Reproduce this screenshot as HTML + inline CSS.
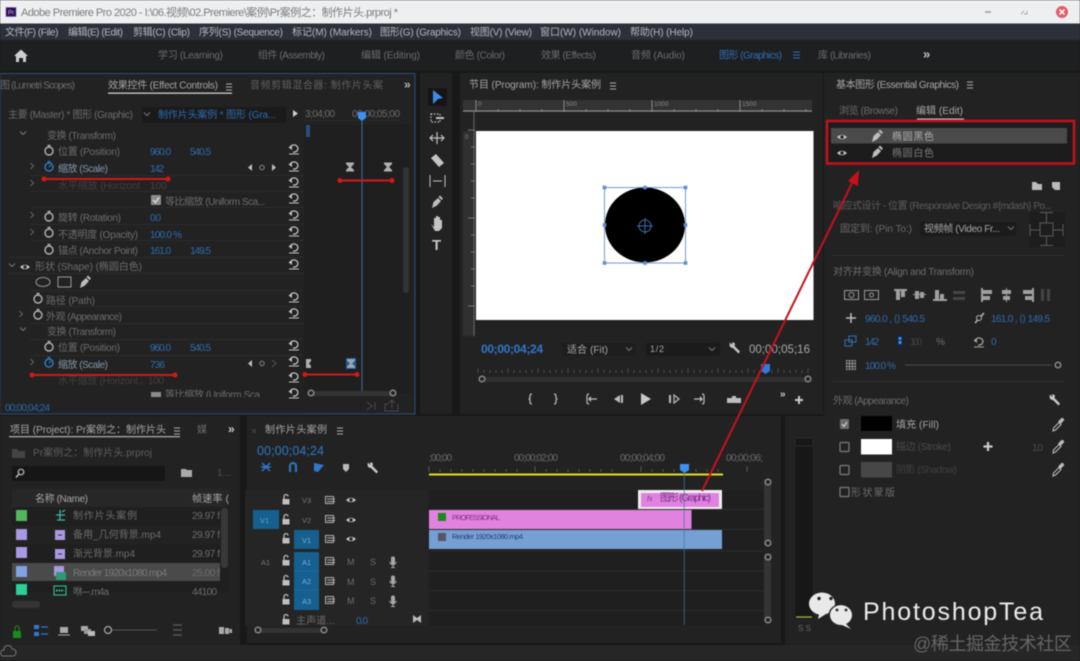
<!DOCTYPE html>
<html lang="zh"><head><meta charset="utf-8"><title>Adobe Premiere Pro 2020</title>
<style>
html,body{margin:0;padding:0;background:#1a1a1a;overflow:hidden}
svg{display:block;filter:blur(.5px)}
text{font-family:"Liberation Sans","Noto Sans CJK SC",sans-serif;font-size:10px;fill:#8e8e8e;white-space:pre}
.m{fill:#b4b8bd}.w{fill:#8a8a8a}.b{fill:#2d6bae}.d{fill:#4e4e4e}.l{fill:#a6a6a6}.g{fill:#6c6c6c}
.ic{fill:none;stroke:#bdbdbd;stroke-width:1.2}
</style></head><body>
<svg width="1080" height="661" viewBox="0 0 1080 661" xmlns="http://www.w3.org/2000/svg" lengthAdjust="spacingAndGlyphs">
<defs>
<g id="rs"><path d="M-4-1A4 3.6 0 1 1-1 3" fill="none" stroke="#c4c4c4" stroke-width="1.3"/><path d="M-5.5-1.5L-2-4V1Z" fill="#c4c4c4"/><path d="M-5 5H5" stroke="#c4c4c4" stroke-width="1"/></g>
<g id="wt"><circle r="4" fill="none" stroke="#b4b4b4" stroke-width="1.4"/><path d="M-1.5-5.5H1.5" stroke="#b4b4b4" stroke-width="1.4"/></g>
<g id="wb"><circle r="4" fill="none" stroke="#2e7cc4" stroke-width="1.4"/><path d="M-1.5-5.5H1.5M0 0L2-2" stroke="#2e7cc4" stroke-width="1.2"/></g>
<g id="ch"><path d="M-1.5-3L1.5 0L-1.5 3" fill="none" stroke="#666" stroke-width="1"/></g>
<g id="cd"><path d="M-3-1.5L0 1.5L3-1.5" fill="none" stroke="#777" stroke-width="1"/></g>
<g id="eye"><path d="M-5 0Q0-4.6 5 0Q0 4.6-5 0Z" fill="#c6c6c6"/><circle r="1.7" fill="#232323"/></g>
<g id="pen"><path d="M-5 6L-3.5 0L1-4L4-1L0 3.5Z" fill="#bdbdbd"/><path d="M1.5-5L3-6.5L6-3.5L4.5-2Z" fill="#bdbdbd"/></g>
<g id="kf"><path d="M-4-4.5H4V-3L1 0L4 3V4.500H-4V3L-1 0L-4-3Z" fill="#b0b0b0"/></g>
<g id="lock"><rect x="-3.500" y="-1" width="7" height="5.500" fill="#c0c0c0"/><path d="M-2-1V-3.500A2 2 0 0 1 2-3.500" fill="none" stroke="#c0c0c0" stroke-width="1.200"/></g>
<g id="syn"><rect x="-4.500" y="-3.500" width="8" height="7" fill="none" stroke="#b0b0b0"/><path d="M-3-1H5M-3 1.500H5" stroke="#b0b0b0"/></g>
<g id="mic"><rect x="-2" y="-5.500" width="4" height="8" rx="2" fill="#a8a8a8"/><path d="M-3.500 0Q0 6 3.500 0M0 3V5.500M-2 5.500H2" stroke="#a8a8a8" fill="none"/></g>
<g id="drop"><path d="M-5 6L-4.500 3L1-2.500L3 -.5L-2.500 5Z" fill="none" stroke="#bbb" stroke-width="1.100"/><path d="M0-3.500L3-6.500A1.500 1.500 0 0 1 5.500-4L2.500-1Z" fill="#bbb"/></g>
<g id="wr"><path d="M-5-5.500L-2.500-3L-3-5.500Q-1-6 0-4L-.5-2L5 3.500L3.500 5.500L-2 0Q-5 0-5.500-3Z" fill="#c8c8c8"/></g>
<g id="cb"><rect x="-4.500" y="-4.500" width="9" height="9" rx="1" fill="none" stroke="#7d7d7d" stroke-width="1.200"/></g>
<g id="hd"><circle r="2.800" fill="#232323" stroke="#8b8b8b" stroke-width="1.500"/></g>
<g id="hb"><rect x="-1.800" y="-1.800" width="3.600" height="3.600" fill="#5e8fd0"/></g>
</defs>

<rect width="1080" height="661" fill="#181818"/>

<!-- title bar -->
<rect width="1080" height="23.500" fill="#edeff1"/>
<rect x="6" y="7.500" width="10" height="9" fill="#2a0b55" stroke="#7a5ca8" stroke-width=".6"/>
<text x="8" y="14.500" style="font-size:6px;fill:#d7c1f2">Pr</text>
<text x="21" y="16" textLength="377" style="font-size:11px;fill:#7c7c7c">Adobe Premiere Pro 2020 - I:\06.视频\02.Premiere\案例\Pr案例之：制作片头.prproj *</text>
<path d="M985 12H991" stroke="#999" stroke-width="1.500"/>
<path d="M1021 14L1024 11M1024 14h3v-3" stroke="#aaa" fill="none"/>
<circle cx="1062" cy="12" r="6" fill="#e25c68"/><path d="M1059.500 9.500L1064.500 14.500M1064.500 9.500L1059.500 14.500" stroke="#fff" stroke-width="1.500"/>

<!-- menu -->
<rect y="23.500" width="1080" height="16.500" fill="#2b313a"/>
<text class="m" x="5" y="35.500" textLength="53.500">文件(F) (File)</text>
<text class="m" x="68" y="35.500" textLength="55">编辑(E) (Edit)</text>
<text class="m" x="133" y="35.500" textLength="57">剪辑(C) (Clip)</text>
<text class="m" x="199" y="35.500" textLength="84">序列(S) (Sequence)</text>
<text class="m" x="292" y="35.500" textLength="80">标记(M) (Markers)</text>
<text class="m" x="380" y="35.500" textLength="81">图形(G) (Graphics)</text>
<text class="m" x="470" y="35.500" textLength="62">视图(V) (View)</text>
<text class="m" x="540" y="35.500" textLength="81">窗口(W) (Window)</text>
<text class="m" x="630" y="35.500" textLength="63">帮助(H) (Help)</text>

<!-- workspace -->
<rect y="40" width="1080" height="31" fill="#1e1f20"/>
<path d="M14 56L21 49.500L28 56H26V62H23V58H19V62H16V56Z" fill="#cfcfcf"/>
<text class="g" x="158" y="58.500" textLength="65">学习 (Learning)</text>
<text class="g" x="258" y="58.500" textLength="67">组件 (Assembly)</text>
<text class="g" x="361" y="58.500" textLength="59">编辑 (Editing)</text>
<text class="g" x="455" y="58.500" textLength="50">颜色 (Color)</text>
<text class="g" x="541" y="58.500" textLength="55">效果 (Effects)</text>
<text class="g" x="631" y="58.500" textLength="54">音频 (Audio)</text>
<text x="719" y="58.500" textLength="63" style="fill:#2f6cb6">图形 (Graphics)</text>
<path d="M793 52H800M793 55H800M793 58H800" stroke="#2f6cb6"/>
<text class="g" x="818" y="58.500" textLength="53">库 (Libraries)</text>
<text x="923" y="58.500" style="font-size:13px;fill:#c4c4c4;font-weight:bold">»</text>

<!-- effect controls panel -->
<rect x="0" y="73.500" width="415" height="340.500" fill="#222223" stroke="#2a4a70" stroke-width="1.200"/>
<text class="g" x="0" y="88.500" textLength="75">图 (Lumetri Scopes)</text>
<text class="l" x="108" y="88.500" textLength="110">效果控件 (Effect Controls)</text>
<path d="M226 84H232M226 87H232M226 90H232" stroke="#aaa"/>
<rect x="108" y="92.500" width="124" height="1.300" fill="#cfcfcf"/>
<text class="d" x="250" y="88.500" textLength="133" style="fill:#606060">音频剪辑混合器: 制作片头案</text>
<text x="404" y="88.500" style="font-size:12px;fill:#bbb;font-weight:bold">»</text>
<text class="g" x="8" y="118" textLength="125">主要 (Master) * 图形 (Graphic)</text>
<rect x="142" y="107" width="144" height="16" fill="#1a1a1b"/>
<use href="#cd" x="147" y="114"/>
<text class="b" x="158" y="118" textLength="118">制作片头案例 * 图形 (Gra...</text>
<path d="M293 110L298 113.500L293 117Z" fill="#cfcfcf"/>
<text class="g" x="305" y="117" textLength="30">3;04;00</text>
<text class="g" x="352" y="117" textLength="48">00;00;05;00</text>
<rect x="304" y="124" width="98" height="270" fill="#1f1f20"/>
<rect x="402" y="124" width="10" height="270" fill="#1f1f20"/>
<rect x="403" y="167" width="6" height="126" rx="3" fill="#333"/>
<rect x="306" y="125" width="4" height="12" fill="#2a4f78"/>
<path d="M305 120.500H400" stroke="#3c3c3c" stroke-dasharray="1 2"/>

<text class="g" x="47" y="139" textLength="69">变换 (Transform)</text><use href="#cd" x="23" y="133"/>
<use href="#wt" x="49" y="151"/><text class="g" x="58" y="155" textLength="62">位置 (Position)</text>
<text class="b" x="150" y="155" textLength="21">960.0</text><text class="b" x="190" y="155" textLength="21">540.5</text>
<use href="#ch" x="32" y="166"/><use href="#wb" x="49" y="167"/><text x="58" y="172" textLength="50" style="fill:#8496aa">缩放 (Scale)</text>
<text class="b" x="150" y="172" textLength="14">142</text>
<path d="M252 164V171L248 167.500ZM272 164V171L276 167.500Z" fill="#c0c0c0"/><circle cx="262" cy="167.500" r="2.200" fill="none" stroke="#888"/>
<use href="#kf" x="350" y="167"/><use href="#kf" x="388" y="167"/>
<use href="#ch" x="32" y="183"/><text class="d" x="58" y="189" textLength="82" style="fill:#3f3f3f">水平缩放 (Horizont</text><text class="d" x="150" y="189" style="fill:#444">100</text>
<rect x="151" y="195" width="10" height="10" rx="1" fill="#8c8c8c"/><path d="M153 200L155.500 202.500L159 197.500" stroke="#ddd" fill="none" stroke-width="1.300"/>
<text class="g" x="165" y="205" textLength="100">等比缩放 (Uniform Sca...</text>
<use href="#ch" x="32" y="215"/><use href="#wt" x="49" y="217"/><text class="g" x="58" y="221" textLength="63">旋转 (Rotation)</text><text class="b" x="150" y="221" textLength="11">0.0</text>
<use href="#ch" x="32" y="232"/><use href="#wt" x="49" y="233"/><text class="g" x="58" y="238" textLength="80">不透明度 (Opacity)</text><text class="b" x="150" y="238" textLength="32">100.0 %</text>
<use href="#wt" x="49" y="250"/><text class="g" x="58" y="254" textLength="80">锚点 (Anchor Point)</text><text class="b" x="150" y="254" textLength="21">161.0</text><text class="b" x="190" y="254" textLength="21">149.5</text>
<use href="#cd" x="12" y="265"/><use href="#eye" x="25" y="267"/><text class="g" x="35" y="270" textLength="107">形状 (Shape) (椭圆白色)</text>
<ellipse cx="43" cy="282" rx="7" ry="4.500" fill="none" stroke="#999"/><rect x="58" y="277" width="13" height="10" fill="none" stroke="#999"/><use href="#pen" x="85" y="282"/>
<use href="#wt" x="38" y="299"/><text class="g" x="46" y="304" textLength="49">路径 (Path)</text>
<use href="#ch" x="21" y="314"/><use href="#wt" x="38" y="315"/><text class="g" x="46" y="320" textLength="76">外观 (Appearance)</text>
<use href="#cd" x="23" y="329"/><text class="g" x="47" y="335" textLength="69">变换 (Transform)</text>
<use href="#wt" x="49" y="347"/><text class="g" x="58" y="351" textLength="62">位置 (Position)</text><text class="b" x="150" y="351" textLength="21">960.0</text><text class="b" x="190" y="351" textLength="21">540.5</text>
<use href="#ch" x="32" y="362"/><use href="#wb" x="49" y="363"/><text x="58" y="368" textLength="50" style="fill:#8496aa">缩放 (Scale)</text><text class="b" x="150" y="368" textLength="15">736</text>
<path d="M252 360V367L248 363.500Z" fill="#c0c0c0"/><path d="M272 360L276 363.500L272 367" fill="none" stroke="#555"/><circle cx="262" cy="363.500" r="2.200" fill="none" stroke="#888"/>
<path d="M306 359H311V361L309 363.500L311 366V368H306Z" fill="#b0b0b0"/>
<rect x="346" y="358" width="10" height="11" fill="#1f5d96"/><use href="#kf" x="351" y="363.500" style="opacity:.85"/>
<text x="58" y="384" textLength="106" style="fill:#3f3f3f">水平缩放 (Horizont... 100</text>
<rect x="151" y="392" width="10" height="6" fill="#8c8c8c"/><text class="g" x="165" y="398" textLength="95">等比缩放 (Uniform Sca</text>
<rect x="0.600" y="397" width="303" height="16.400" fill="#222223"/>
<rect x="311" y="391" width="82" height="5" fill="#333"/><use href="#hd" x="311" y="393"/><use href="#hd" x="393" y="393"/>
<use href="#rs" x="294" y="149"/><use href="#rs" x="294" y="166"/><use href="#rs" x="294" y="182"/><use href="#rs" x="294" y="198"/><use href="#rs" x="294" y="215"/><use href="#rs" x="294" y="231"/><use href="#rs" x="294" y="248"/><use href="#rs" x="294" y="264"/><use href="#rs" x="294" y="297"/><use href="#rs" x="294" y="313"/><use href="#rs" x="294" y="345"/><use href="#rs" x="294" y="361"/><use href="#rs" x="294" y="377"/><use href="#rs" x="294" y="393"/>
<path d="M30 175.500H304M30 191.500H304M30 207.500H304M30 224.500H304M30 240.500H304M8 257.500H304M8 273.500H304M30 290.500H304M30 306.500H304M30 323.500H304M30 339.500H304M30 355.500H304" stroke="#2a2a2b"/>
<rect x="361.500" y="118" width="1" height="273" fill="#4a6c95"/>
<path d="M358 112H366V118L362 121L358 118Z" fill="#3f90f0"/>
<text x="5" y="411" textLength="45" style="fill:#2a68ac">00;00;04;24</text>
<path d="M367 402L372 406L367 410M375 402V410" fill="none" stroke="#4a4a4a"/><path d="M388 404H385V411H398V404M392 408V401M389 403L392 400L395 403" fill="none" stroke="#4a4a4a"/>
<path d="M42 179H168" stroke="#d31818" stroke-width="2"/><circle cx="44" cy="179" r="2.500" fill="#d31818"/><circle cx="168" cy="179" r="2.500" fill="#d31818"/>
<path d="M340 180.500H392" stroke="#d31818" stroke-width="2"/><circle cx="340" cy="180.500" r="2.500" fill="#d31818"/><circle cx="392" cy="180.500" r="2.500" fill="#d31818"/>
<path d="M32 375H175" stroke="#d31818" stroke-width="2"/><circle cx="32" cy="375" r="2.500" fill="#d31818"/><circle cx="175" cy="375" r="2.500" fill="#d31818"/>
<path d="M304 374.500H357" stroke="#d31818" stroke-width="2"/><circle cx="305" cy="374.500" r="2.500" fill="#d31818"/><circle cx="357" cy="374.500" r="2.500" fill="#d31818"/>

<!-- tools -->
<rect x="420" y="73" width="32" height="341" fill="#222223"/>
<rect x="428" y="88" width="19" height="18" fill="#151515"/>
<path d="M433 90L443 98L438 99L433 104Z" fill="#3a8ce6"/>
<g fill="none" stroke="#c4c4c4" stroke-width="1.200">
<rect x="431" y="114" width="9" height="8" stroke-dasharray="1.500 1.500"/><path d="M436 118H444" stroke-width="2"/>
<path d="M430 138H444M433 135L430 138L433 141M441 135L444 138L441 141M437 132V144" /></g>
<path d="M431 158L436 154L444 163L439 167Z" fill="#c4c4c4"/>
<g stroke="#c4c4c4" fill="none"><path d="M430 175V187M445 175V187M433 181H442"/></g>
<use href="#pen" x="437" y="202"/>
<path d="M431 224L434 227V218H436V224V216H438V224V217H440V224V220H442V228L439 231H435Z" fill="#c4c4c4"/>
<text x="432" y="250" style="font-size:15px;font-weight:bold;fill:#c4c4c4">T</text>

<!-- program -->
<rect x="460" y="73" width="363" height="341" fill="#222223"/>
<text class="l" x="469" y="88" textLength="132">节目 (Program): 制作片头案例</text>
<path d="M610 83H616M610 86H616M610 89H616" stroke="#aaa"/>
<rect x="463" y="100" width="349" height="12" fill="#333334"/>
<path d="M476 100V112M564 100V112M652 100V112M740 100V112" stroke="#8a8a8a"/>
<path d="M463 111H812" stroke="#9a9a9a"/>
<path d="M476 112V108M498 112V109M520 112V109M542 112V109M586 112V109M608 112V109M630 112V109M674 112V109M696 112V109M718 112V109M762 112V109M784 112V109M806 112V109" stroke="#888"/>
<text x="478" y="106" style="font-size:6.500px;fill:#888">0</text><text x="566" y="106" style="font-size:6.500px;fill:#888">500</text><text x="654" y="106" style="font-size:6.500px;fill:#888">1000</text><text x="742" y="106" style="font-size:6.500px;fill:#888">1500</text>
<rect x="463" y="112" width="12" height="224" fill="#303031"/>
<rect x="463" y="112" width="12" height="19" fill="#222223"/>
<path d="M474 112V336" stroke="#666"/>
<path d="M468 130H475M471 147H475M471 164H475M471 181H475M471 198H475M468 218H475M471 235H475M471 252H475M471 269H475M471 286H475M468 306H475" stroke="#777"/>
<text x="465" y="139" style="font-size:6px;fill:#888">0</text>
<rect x="476" y="131" width="337.500" height="189" fill="#fff"/>
<ellipse cx="645" cy="225" rx="40" ry="37.500" fill="#000"/>
<rect x="604.500" y="187.500" width="81" height="75.500" fill="none" stroke="#4f80c4" stroke-width=".8"/>
<use href="#hb" x="604.500" y="187.500"/><use href="#hb" x="645" y="187.500"/><use href="#hb" x="685.500" y="187.500"/><use href="#hb" x="604.500" y="225"/><use href="#hb" x="685.500" y="225"/><use href="#hb" x="604.500" y="263"/><use href="#hb" x="645" y="263"/><use href="#hb" x="685.500" y="263"/>
<circle cx="645" cy="226" r="6" fill="none" stroke="#3a6fb0"/><path d="M637 226H653M645 218V234" stroke="#3a6fb0"/>
<text x="481" y="353" textLength="62" style="font-size:12px;fill:#2f78c8;font-weight:bold">00;00;04;24</text>
<rect x="562" y="343" width="74" height="13" fill="#1e1e1f"/><rect x="646" y="343" width="74" height="13" fill="#1b1b1c"/>
<text class="l" x="567" y="353" textLength="41">适合 (Fit)</text><use href="#cd" x="629" y="349"/>
<text class="l" x="650" y="352" textLength="14" style="font-size:9px">1/2</text><use href="#cd" x="712" y="349"/>
<use href="#wr" x="735" y="348"/>
<text x="749" y="353" textLength="61" style="font-size:11.500px;fill:#a8a8a8">00;00;05;16</text>
<path d="M478 373V368M484 373V370M490 373V370M496 373V370M502 373V370M508 373V368M514 373V370M520 373V370M526 373V370M532 373V370M538 373V368M544 373V370M550 373V370M556 373V370M562 373V370M568 373V368M574 373V370M580 373V370M586 373V370M592 373V370M598 373V368M604 373V370M610 373V370M616 373V370M622 373V370M628 373V368M634 373V370M640 373V370M646 373V370M652 373V370M658 373V368M664 373V370M670 373V370M676 373V370M682 373V370M688 373V368M694 373V370M700 373V370M706 373V370M712 373V370M718 373V368M724 373V370M730 373V370M736 373V370M742 373V370M748 373V368M754 373V370M760 373V370M766 373V370M772 373V370M778 373V368M784 373V370M790 373V370M796 373V370M802 373V370M808 373V368" stroke="#4c4c4c"/>
<path d="M761 364H770V371L765.500 374L761 371Z" fill="#2f7ae0"/>
<rect x="482" y="377" width="326" height="5" fill="#303031"/><use href="#hd" x="482" y="379"/><use href="#hd" x="808" y="379"/>
<g fill="none" stroke="#bdbdbd" stroke-width="1.200">
<path d="M532 394Q530 394 530 396V398L529 399L530 400V402Q530 404 532 404"/>
<path d="M554 394Q556 394 556 396V398L557 399L556 400V402Q556 404 554 404"/>
<path d="M589 394Q587 394 587 396V402Q587 404 589 404M597 399H591"/>
<path d="M702 394Q704 394 704 396V402Q704 404 702 404M694 399H700"/>
<path d="M674 395L679 399L674 403Z"/></g>
<path d="M591 396L588 399L591 402ZM700 396L703 399L700 402Z" fill="#bdbdbd"/>
<path d="M623 395V403H621V395ZM620 395V403L614 399Z" fill="#bdbdbd"/>
<path d="M641 393L651 399L641 405Z" fill="#c8c8c8"/>
<path d="M669 395H671V403H669Z" fill="#bdbdbd"/>
<path d="M727 398H732V396H736V398H741V403H727Z" fill="#bdbdbd"/>
<text x="780" y="397" style="font-size:10px;fill:#ccc;font-weight:bold">»</text>
<path d="M799 396V404M795 400H803" stroke="#ccc" stroke-width="2"/>

<!-- essential graphics -->
<rect x="824" y="73" width="256" height="572" fill="#222223"/>
<text class="l" x="836" y="88" textLength="123">基本图形 (Essential Graphics)</text>
<path d="M967 82H973M967 85H973M967 88H973" stroke="#aaa"/>
<text class="g" x="839" y="114" textLength="59">浏览 (Browse)</text>
<text class="l" x="916" y="114" textLength="47">编辑 (Edit)</text>
<rect x="917" y="118.500" width="47" height="1.200" fill="#ccc"/>
<rect x="827" y="121" width="247" height="42.500" fill="#1c1c1d"/>
<rect x="831" y="128" width="236" height="15.500" fill="#4a4a4a"/>
<use href="#eye" x="842" y="137"/><use href="#pen" x="877" y="136"/>
<text x="892" y="140" textLength="42" style="fill:#aaa">椭圆黑色</text>
<use href="#eye" x="842" y="153"/><use href="#pen" x="877" y="152"/>
<text x="892" y="156.500" textLength="42" style="fill:#7a7a7a">椭圆白色</text>
<rect x="827" y="121" width="247" height="42.500" fill="none" stroke="#c4121a" stroke-width="2.500"/>
<path d="M1032 182H1036L1038 184H1042V190H1032Z" fill="#bbb"/>
<path d="M1052 182H1060V190H1055L1052 187Z" fill="#bbb"/>
<text x="833" y="209" textLength="219" style="fill:#5c5c5c">响应式设计 - 位置 (Responsive Design #{mdash} Po...</text>
<text x="840" y="232" textLength="72" style="fill:#6a6a6a">固定到: (Pin To:)</text>
<rect x="920" y="222" width="96" height="14" fill="#1b1b1c"/>
<text class="l" x="924" y="232" textLength="76">视频帧 (Video Fr...</text><use href="#cd" x="1011" y="228"/>
<rect x="1029" y="212" width="36" height="35" fill="#1d1d1e"/>
<rect x="1040" y="223" width="13" height="13" fill="none" stroke="#5a5a5a"/>
<path d="M1040 212.500H1053M1046.500 212.500V223M1040 245.500H1053M1046.500 236V245.500M1030 230H1040M1030 224V236M1053 230H1063M1063 224V236" stroke="#5a5a5a" fill="none"/>
<path d="M833 255.500H1065" stroke="#2f2f30"/>
<text class="g" x="833" y="275" textLength="141">对齐并变换 (Align and Transform)</text>
<g fill="none" stroke="#9a9a9a"><rect x="844.500" y="290.500" width="14" height="9"/><rect x="864.500" y="290.500" width="14" height="9"/><circle cx="851.500" cy="295" r="2.500"/><circle cx="871.500" cy="295" r="2"/></g>
<g fill="#a0a0a0"><rect x="894" y="289" width="13" height="2"/><rect x="896" y="291" width="4" height="9"/><rect x="901" y="291" width="4" height="6"/>
<rect x="913" y="294" width="13" height="1"/><rect x="915" y="291" width="4" height="8"/><rect x="920" y="292" width="4" height="6"/>
<rect x="933" y="299" width="14" height="2"/><rect x="935" y="290" width="4" height="9"/><rect x="940" y="294" width="4" height="5"/>
<rect x="981" y="288" width="2" height="14"/><rect x="983" y="290" width="9" height="4"/><rect x="983" y="296" width="7" height="4"/>
<rect x="1006" y="288" width="1" height="14"/><rect x="1002" y="290" width="9" height="4"/><rect x="1003" y="296" width="7" height="4"/>
<rect x="1032" y="288" width="2" height="14"/><rect x="1023" y="290" width="9" height="4"/><rect x="1025" y="296" width="7" height="4"/></g>
<g fill="#444"><rect x="953" y="291" width="12" height="3"/><rect x="953" y="297" width="12" height="3"/><rect x="1041" y="289" width="3" height="12"/><rect x="1047" y="289" width="3" height="12"/></g>
<path d="M851 313V323M846 318H856" stroke="#bbb" stroke-width="1.500"/>
<text class="b" x="865" y="322" textLength="60">960.0 , ⟨⟩ 540.5</text>
<path d="M975 323L984 313" stroke="#bbb" stroke-width="1.500"/><circle cx="979" cy="318" r="2.500" fill="#222" stroke="#bbb"/>
<text class="b" x="991" y="322" textLength="59">161.0 , ⟨⟩ 149.5</text>
<rect x="845" y="340" width="7" height="6" fill="none" stroke="#2e6eb4"/><rect x="849" y="336" width="7" height="6" fill="none" stroke="#2e6eb4"/>
<text class="b" x="865" y="345" textLength="14">142</text>
<rect x="896" y="335" width="8" height="12" rx="2" fill="#14243a"/><path d="M900 337V345" stroke="#3f8fe8" stroke-width="3" stroke-dasharray="3 1"/>
<text class="d" x="910" y="345" textLength="12" style="fill:#424242">100</text><text class="g" x="936" y="345" textLength="9">%</text>
<use href="#rs" x="979" y="342" style="opacity:.8"/><text class="b" x="991" y="345">0</text>
<rect x="846" y="360" width="10" height="10" fill="#9a9a9a"/><path d="M846 362H856M846 365H856M846 368H856M848 360V370M851 360V370M854 360V370" stroke="#333"/>
<text class="b" x="865" y="369" textLength="31">100.0 %</text>
<path d="M905 365H1052" stroke="#4a4a4a"/><use href="#hd" x="1058" y="365"/>
<path d="M833 381.500H1065" stroke="#2f2f30"/>
<text class="g" x="833" y="404" textLength="76">外观 (Appearance)</text>
<use href="#wr" x="1055" y="400"/>
<rect x="840" y="419" width="9" height="10" rx="1" fill="#6c6c6c"/><path d="M842 424L844 426.500L847 422" stroke="#ccc" fill="none" stroke-width="1.200"/>
<rect x="861" y="416" width="31" height="15" fill="#000"/>
<text class="l" x="896" y="428" textLength="43">填充 (Fill)</text><use href="#drop" x="1058" y="425"/>
<use href="#cb" x="844.500" y="447"/>
<rect x="861" y="439" width="31" height="15.500" fill="#fff"/>
<text x="896" y="450" textLength="55" style="fill:#4a4a4a">描边 (Stroke)</text>
<path d="M988 442V451M983.500 446.500H992.500" stroke="#ccc" stroke-width="2.200"/>
<text x="1032" y="451" textLength="11" style="fill:#4a4a4a">1.0</text><use href="#drop" x="1058" y="447"/>
<use href="#cb" x="844.500" y="470"/>
<rect x="861" y="462" width="31" height="15.500" fill="#474747"/>
<text x="896" y="473" textLength="61" style="fill:#404040">阴影 (Shadow)</text><use href="#drop" x="1058" y="470"/>
<use href="#cb" x="844.500" y="492"/>
<text class="g" x="851" y="496" textLength="44">形状蒙版</text>

<!-- project -->
<rect x="0" y="416" width="240" height="229" fill="#222223"/>
<text class="l" x="10" y="433" textLength="156">项目 (Project): Pr案例之：制作片头</text>
<path d="M174 428H180M174 431H180M174 434H180" stroke="#aaa"/>
<rect x="9" y="436" width="171" height="1.300" fill="#aaa"/>
<text class="g" x="197" y="433" textLength="9">媒</text>
<text x="228" y="433" style="font-size:12px;fill:#ccc;font-weight:bold">»</text>
<path d="M12 449H17L19 451H25V458H12Z" fill="#444"/>
<text x="33" y="456" textLength="119" style="fill:#5f5f5f">Pr案例之：制作片头.prproj</text>
<rect x="12" y="466" width="153" height="15" fill="#161617"/>
<circle cx="21" cy="472" r="2.800" fill="none" stroke="#bbb" stroke-width="1.200"/><path d="M19 474L16 477.500" stroke="#bbb" stroke-width="1.500"/>
<path d="M181 469H186L187 470H192V477H181Z" fill="#aaa"/>
<text class="d" x="217" y="476" style="fill:#505050">1...</text>
<rect x="12" y="489" width="217" height="104" fill="#1f1f20"/>
<rect x="12" y="489" width="217" height="18" fill="#272728"/>
<text class="l" x="35" y="502" textLength="53">名称 (Name)</text>
<text class="l" x="192" y="502" textLength="37">帧速率 (</text>
<rect x="12" y="526" width="208" height="18" fill="#222223"/>
<rect x="12" y="563" width="208" height="18" fill="#4a4a4a"/>
<rect x="16" y="510" width="11" height="11" fill="#52b75c"/>
<rect x="16" y="529" width="11" height="11" fill="#a999e2"/>
<rect x="16" y="547" width="11" height="11" fill="#a999e2"/>
<rect x="16" y="566" width="11" height="11" fill="#80a2e0"/>
<rect x="16" y="584" width="11" height="11" fill="#2dcf95"/>
<path d="M56 515H65M60 510V520M57 520H65M62 512L65 510" stroke="#3fb8a8" stroke-width="1.300" fill="none"/>
<rect x="55" y="530" width="10" height="10" fill="#a999e2"/><path d="M58 535H62" stroke="#333"/>
<rect x="55" y="549" width="10" height="10" fill="#a999e2"/><path d="M58 554H62" stroke="#333"/>
<rect x="54" y="566" width="10" height="10" fill="#a999e2"/><rect x="56" y="572" width="10" height="8" fill="#2e9a72"/>
<rect x="54" y="586" width="12" height="9" fill="none" stroke="#2dcf95"/><path d="M56 590.500H64" stroke="#2dcf95" stroke-width="2" stroke-dasharray="1.500 1"/>
<text class="g" x="73" y="519" textLength="64">制作片头案例</text><text class="g" x="192" y="519" textLength="28">29.97 f</text>
<text class="g" x="73" y="538" textLength="88">备用_几何背景.mp4</text><text class="g" x="192" y="538" textLength="28">29.97 f</text>
<text class="g" x="73" y="557" textLength="62">渐光背景.mp4</text><text class="g" x="192" y="557" textLength="28">29.97 f</text>
<text x="73" y="576" textLength="94" style="fill:#7a7a7a">Render 1920x1080.mp4</text><text class="g" x="192" y="576" textLength="28">25.00 f</text>
<text class="g" x="73" y="595" textLength="36">咻---.m4a</text><text class="g" x="192" y="595" textLength="25">44100</text>
<rect x="221" y="508" width="7" height="60" rx="3" fill="#383839"/>
<rect x="12" y="601" width="28" height="7" rx="3" fill="#343435"/>
<rect x="13" y="631" width="8" height="7" fill="#1c8a1c"/><path d="M15 631V627Q17 625 19 627V631" fill="none" stroke="#1c8a1c"/>
<rect x="34" y="625" width="5" height="4" fill="#2d7cd4"/><rect x="34" y="632" width="5" height="4" fill="#2d7cd4"/><path d="M41 627H48M41 634H48" stroke="#2d7cd4" stroke-width="1.300"/>
<rect x="60" y="627" width="8" height="6" fill="#aaa"/><path d="M58 635H70" stroke="#aaa"/>
<rect x="81" y="626" width="7" height="5" fill="#aaa"/><rect x="84" y="629" width="7" height="5" fill="#999"/><rect x="88" y="631" width="7" height="5" fill="#bbb"/>
<path d="M108 630H157" stroke="#555"/><circle cx="108" cy="630" r="3.500" fill="#222" stroke="#aaa" stroke-width="1.200"/>
<path d="M173 625H182M173 630H182M173 635H182" stroke="#555" stroke-width="1.500"/>
<rect x="219" y="627" width="5" height="7" fill="#aaa"/><rect x="225" y="628" width="4" height="6" fill="#aaa"/><rect x="229.500" y="629" width="2.500" height="4" fill="#aaa"/>

<!-- timeline -->
<rect x="247" y="416" width="534" height="227" fill="#222223"/>
<path d="M252 429L256 433M256 429L252 433" stroke="#444"/>
<text class="l" x="265" y="433" textLength="62">制作片头案例</text>
<path d="M337 428H343M337 431H343M337 434H343" stroke="#aaa"/>
<text x="257" y="455" textLength="67" style="font-size:12.500px;fill:#2f78c8">00;00;04;24</text>
<path d="M262 463L270 471M270 463L262 471M261 467H271" stroke="#2e78c8" stroke-width="1.500"/>
<path d="M289 472V466A4 4 0 0 1 297 466V472H295V466A2 2 0 0 0 291 466V472Z" fill="#2e78c8"/>
<path d="M314 463L324 465L318 472L314 471Z" fill="#2e78c8"/>
<path d="M343 464H349V469L346 472L343 469Z" fill="#bbb"/>
<use href="#wr" x="373" y="468"/>
<text class="g" x="429" y="461" textLength="23">;00;00</text><text class="g" x="514" y="461" textLength="44">00;00;02;00</text><text class="g" x="620" y="461" textLength="45">00;00;04;00</text><text class="g" x="726" y="461" textLength="37">00;00;06;</text>
<path d="M429 472V466M440 472V469M451 472V469M462 472V469M473 472V469M484 472V469M495 472V469M506 472V469M517 472V469M535 472V466M546 472V469M557 472V469M568 472V469M579 472V469M590 472V469M601 472V469M612 472V469M641 472V466M652 472V469M663 472V469M674 472V469M696 472V469M707 472V469M718 472V469M747 472V466" stroke="#555"/>
<rect x="429" y="473.500" width="294" height="2" fill="#e2dc24"/>
<rect x="245" y="490" width="183" height="136" fill="#252526"/>
<rect x="429" y="490" width="335" height="136" fill="#1f1f20"/>
<path d="M429 509.500H764M429 529.500H764M429 551H764M429 571H764M429 590.500H764M429 610.500H764" stroke="#2c2c2d"/>
<rect x="253" y="510" width="26" height="19" fill="#15608f"/><text x="260" y="523" style="font-size:7.500px;fill:#6aa0c4">V1</text>
<rect x="294" y="530" width="25" height="19" fill="#15608f"/><rect x="294" y="552" width="25" height="58" fill="#15608f"/>
<path d="M294 571H319M294 590H319" stroke="#1c6a9c"/>
<text x="302" y="503" style="font-size:7.500px;fill:#777">V3</text><text x="302" y="523" style="font-size:7.500px;fill:#777">V2</text><text x="302" y="543" style="font-size:7.500px;fill:#7aaccf">V1</text>
<text x="261" y="565" style="font-size:7.500px;fill:#777">A1</text>
<text x="302" y="565" style="font-size:7.500px;fill:#7aaccf">A1</text><text x="302" y="584" style="font-size:7.500px;fill:#7aaccf">A2</text><text x="302" y="604" style="font-size:7.500px;fill:#7aaccf">A3</text>
<use href="#lock" x="286" y="500"/><use href="#lock" x="286" y="520"/><use href="#lock" x="286" y="539"/><use href="#lock" x="286" y="561"/><use href="#lock" x="286" y="581"/><use href="#lock" x="286" y="600"/><use href="#lock" x="286" y="620"/>
<use href="#syn" x="330" y="500"/><use href="#syn" x="330" y="519"/><use href="#syn" x="330" y="539"/><use href="#syn" x="330" y="561"/><use href="#syn" x="330" y="581"/><use href="#syn" x="330" y="600"/>
<use href="#eye" x="351" y="500"/><use href="#eye" x="351" y="520"/><use href="#eye" x="351" y="539"/>
<text class="g" x="347" y="565" style="font-size:9px">M</text><text class="g" x="347" y="585" style="font-size:9px">M</text><text class="g" x="347" y="604" style="font-size:9px">M</text>
<text class="g" x="370" y="565" style="font-size:9px">S</text><text class="g" x="370" y="585" style="font-size:9px">S</text><text class="g" x="370" y="604" style="font-size:9px">S</text>
<use href="#mic" x="393" y="562"/><use href="#mic" x="393" y="581"/><use href="#mic" x="393" y="601"/>
<text class="g" x="296" y="624" textLength="39">主声道...</text><text x="356" y="624" textLength="12" style="fill:#2d6bae">0.0</text>
<path d="M413 615L417 618L421 615V623L417 620L413 623Z" fill="#bbb"/>
<rect x="258" y="628" width="66" height="5" fill="#333"/><use href="#hd" x="258" y="630"/><use href="#hd" x="324" y="630"/>
<rect x="429" y="510" width="262.500" height="19" fill="#e181e0"/>
<rect x="438" y="513" width="8" height="8" fill="#1a8a1a"/>
<text x="452" y="520" textLength="48" style="font-size:7.500px;fill:#8a2f8a">PROFESSIONAL</text>
<rect x="429" y="530" width="293" height="19" fill="#76a0d4"/>
<rect x="438" y="533" width="8" height="8" fill="#556"/>
<text x="452" y="539" textLength="71" style="font-size:7.500px;fill:#2a3a78">Render 1920x1080.mp4</text>
<rect x="638" y="490" width="84" height="19" fill="#eee"/>
<rect x="641" y="493" width="78" height="14" fill="#e181e0"/>
<text x="647" y="501" style="font-size:7px;fill:#6a3f9a;font-style:italic">fx</text>
<text x="660" y="501" textLength="51" style="fill:#7a2f8a">图形 (Graphic)</text>
<rect x="683.700" y="472" width="1" height="153" fill="#4a7299" opacity=".75"/>
<path d="M680 464H689V470L684.500 473L680 470Z" fill="#3f90f0"/>
<rect x="764" y="480" width="7" height="65" fill="#343435"/><rect x="764" y="556" width="7" height="65" fill="#343435"/>
<use href="#hd" x="768" y="482"/><use href="#hd" x="768" y="543"/><use href="#hd" x="768" y="557"/><use href="#hd" x="768" y="620"/>

<!-- meter -->
<rect x="785" y="416" width="39" height="229" fill="#222223"/>
<rect x="795" y="438" width="18" height="180" fill="#171718"/>
<rect x="795" y="438" width="18" height="8" fill="none" stroke="#2a2a2a"/>
<path d="M796 617H812" stroke="#b4b840" stroke-width="1.200"/>
<text x="798" y="631" textLength="13" style="font-size:8px;fill:#666">S S</text>

<!-- bottom -->
<rect y="645" width="1080" height="16" fill="#262627"/>
<path d="M3 656A3 3 0 0 1 4 650A4 4 0 0 1 12 649A3.500 3.500 0 0 1 13 656Z" fill="none" stroke="#777"/>

<!-- red arrow -->
<path d="M702 491L855 177" stroke="#c4121a" stroke-width="2"/>
<path d="M859 170L858 186L848 181Z" fill="#c4121a"/>

<!-- watermark -->
<path d="M809 604A13 11 0 1 1 826 614L818 619L819 614.500A13 11 0 0 1 809 604Z" fill="#e9e9e9"/>
<circle cx="819" cy="598.500" r="1.700" fill="#222"/><circle cx="831" cy="598.500" r="1.700" fill="#222"/>
<ellipse cx="841" cy="615" rx="12.500" ry="11" fill="#222"/>
<path d="M830 615A11 10 0 1 1 846 624L851 629L842 625A11 10 0 0 1 830 615Z" fill="#e9e9e9"/>
<circle cx="837" cy="610" r="1.400" fill="#222"/><circle cx="846" cy="610" r="1.400" fill="#222"/>
<text x="863" y="620" textLength="180" style="font-size:25px;fill:#ececec">PhotoshopTea</text>
<text x="913" y="650" textLength="159" style="font-size:18px;fill:#666">@稀土掘金技术社区</text>
</svg>
</body></html>
